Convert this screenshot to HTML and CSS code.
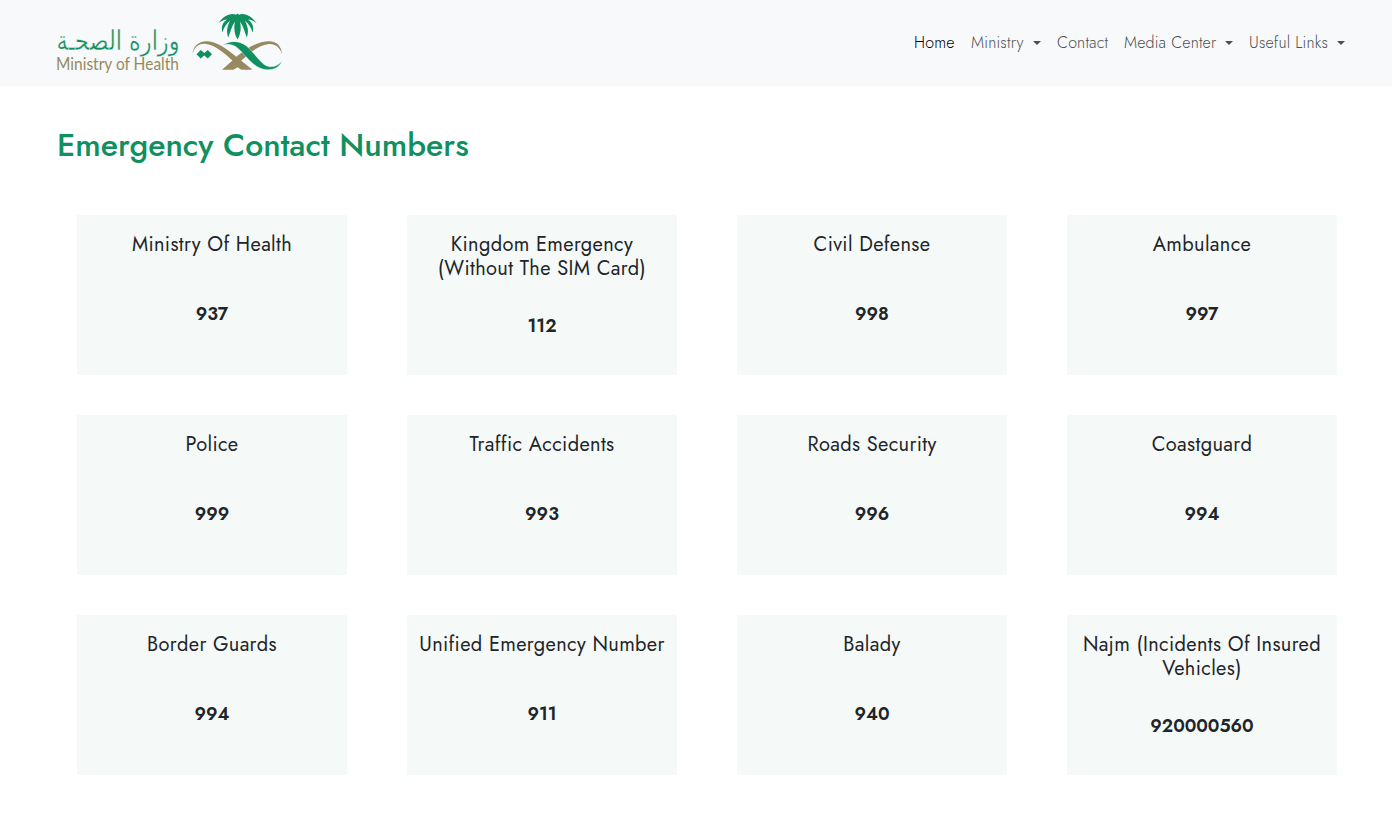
FILE: index.html
```html
<!DOCTYPE html>
<html lang="en">
<head>
<meta charset="utf-8">
<title>Emergency Contact Numbers</title>
<link rel="stylesheet" href="styles.css">
</head>
<body>
<header class="header">
  <a class="brand" aria-label="Ministry of Health">
    <svg class="logo" width="230" height="66" viewBox="56 10 230 66">
      <text class="logo-ar" x="179.500" y="50" direction="rtl" textLength="123" lengthAdjust="spacingAndGlyphs">وزارة الصحـة</text>
      <text class="logo-en" x="56" y="69.500" textLength="123" lengthAdjust="spacingAndGlyphs">Ministry of Health</text>
      <g class="gold">
        <path d="M192.500 54C193 46 199 41.200 206 41.200C217 41.200 226 48.500 233.500 54.500L252.500 69.700H241.500L237.500 67.200L233.500 69.700H222L232.500 60.500C224 53 215 44.500 205 43.700C198 43.300 194 48 192.500 54Z"/>
        <path d="M236 57C246 49 257 41.200 269 41.200C277 41.200 281.500 46.500 282 54C279.500 47 275 43.500 268 44.200C257 45.500 249 54 240 61.500Z"/>
      </g>
      <path class="green ribbon" d="M222.500 45.500C229 40.500 239 40 246.500 46C253 51.500 257 58.500 263.500 64C269 68.500 276 67.500 281.800 61.500C278.500 69 270 71.500 261 68.500C251 64.500 245 54.500 237.500 48C233 44.300 227.500 43.300 222.500 45.500Z"/>
      <g class="green">
        <path d="M200.700 50L204.300 53L207.800 50L212 54.200L207.800 58.400L204.300 55.400L200.700 58.400L196.500 54.200Z"/>
        <path d="M237.500 13.600L239 14.700C241 13.500 244 13.700 247 15C251 16.500 253 19 256.700 23C253 20.800 251 19.500 248 19.500C252 22 254.500 27 252.500 32.500C251.500 28 249 24 244.800 20.700C248 26 249 32 246.800 37.500C244.500 32 243.500 26 240 21.500C241.500 28 240.500 35 237.500 39.500C234.500 35 233.500 28 235 21.500C231.500 26 230.500 32 228.200 37.500C226 32 227 26 230.200 20.700C226 24 223.500 28 222.500 32.500C220.500 27 223 22 227 19.500C224 19.500 222 20.800 218.500 23C221.500 19 224 16.500 228 15C231 13.700 234 13.500 236 14.700Z"/>
      </g>
    </svg>
  </a>
  <nav class="nav">
    <a class="link active home">Home</a>
    <a class="link ministry">Ministry<i class="caret"></i></a>
    <a class="link contact">Contact</a>
    <a class="link media">Media Center<i class="caret"></i></a>
    <a class="link useful">Useful Links<i class="caret"></i></a>
  </nav>
</header>
<main class="main">
  <h1 class="title">Emergency Contact Numbers</h1>
  <section class="cards">
    <article class="card"><h2 class="name">Ministry Of Health</h2><p class="number">937</p></article>
    <article class="card"><h2 class="name">Kingdom Emergency (Without The SIM Card)</h2><p class="number">112</p></article>
    <article class="card"><h2 class="name">Civil Defense</h2><p class="number">998</p></article>
    <article class="card"><h2 class="name">Ambulance</h2><p class="number">997</p></article>
    <article class="card"><h2 class="name">Police</h2><p class="number">999</p></article>
    <article class="card"><h2 class="name">Traffic Accidents</h2><p class="number">993</p></article>
    <article class="card"><h2 class="name">Roads Security</h2><p class="number">996</p></article>
    <article class="card"><h2 class="name">Coastguard</h2><p class="number">994</p></article>
    <article class="card"><h2 class="name">Border Guards</h2><p class="number">994</p></article>
    <article class="card"><h2 class="name">Unified Emergency Number</h2><p class="number">911</p></article>
    <article class="card"><h2 class="name">Balady</h2><p class="number">940</p></article>
    <article class="card"><h2 class="name">Najm (Incidents Of Insured Vehicles)</h2><p class="number">920000560</p></article>
  </section>
</main>
</body>
</html>
```
FILE: styles.css
```css
* { box-sizing: border-box; }
body { margin: 0; background: #fff; color: #212529; font-family: Jost, Lato, sans-serif; }
.header { display: flex; justify-content: space-between; height: 86px; padding: 10px 39px 0 56px; background: #f8f9fb; }
.brand { display: block; }
.logo { display: block; overflow: visible; }
.logo-ar { font-family: "DejaVu Sans", sans-serif; font-size: 27px; fill: #11905f; stroke: #f8f9fb; stroke-width: .4px; }
.logo-en { font-family: Lato, sans-serif; font-size: 16.5px; fill: #978a60; }
.gold { fill: #978a60; }
.green { fill: #11905f; }
.ribbon { stroke: #f8f9fb; stroke-width: .4px; }
.nav { display: flex; align-items: flex-start; padding-top: 13px; }
.link { display: flex; align-items: center; justify-content: space-between; padding: 8px; font-size: 16px; line-height: 24px; font-weight: 300; letter-spacing: .18px; color: #4d4f51; white-space: nowrap; }
.active { color: #000; }
.home { width: 57px; }
.ministry { width: 86px; }
.contact { width: 67px; }
.media { width: 125px; }
.useful { width: 112px; }
.caret { border: 4.5px solid transparent; border-top-color: #4d4f51; border-bottom: 0; }
.main { padding: 40px 55px 0 57px; }
.title { margin: 0; font-size: 32px; line-height: 38px; font-weight: 500; color: #11905f; white-space: nowrap; }
.cards { display: grid; grid-template-columns: repeat(4, 270px); gap: 40px 60px; padding: 51px 0 0 20px; }
.card { display: flex; flex-direction: column; height: 160px; padding: 18px 10px 4px; background: #f5f9f8; text-align: center; }
.name { margin: 0; font-size: 20px; line-height: 24px; font-weight: 400; letter-spacing: .35px; }
.number { display: flex; flex: 1; align-items: center; justify-content: center; margin: 0; font-size: 18px; line-height: 24px; font-weight: 600; }
```
